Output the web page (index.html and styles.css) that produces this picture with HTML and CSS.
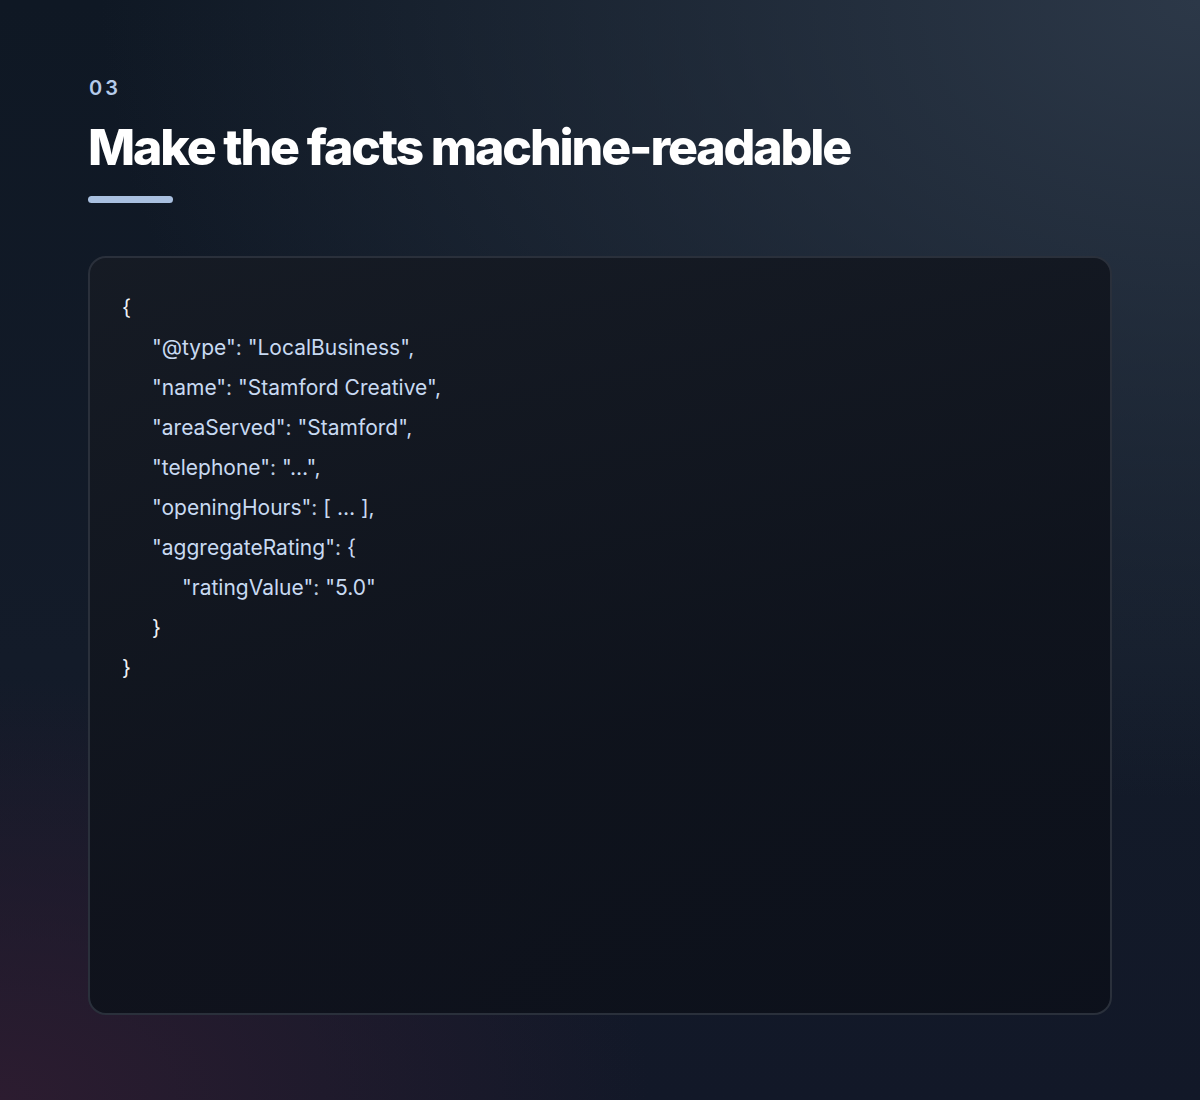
FILE: index.html
```html
<!DOCTYPE html>
<html lang="en">
<head>
<meta charset="utf-8">
<link rel="stylesheet" href="styles.css">
</head>
<body>
<main class="slide">
  <div class="eyebrow">03</div>
  <h1 class="title">Make the facts machine-readable</h1>
  <div class="rule"></div>
  <section class="card">
    <pre class="code"><span class="b">{</span>
<span class="i1"><span class="k">"@type"</span><span class="p">: </span><span class="k">"LocalBusiness",</span></span>
<span class="i1"><span class="k">"name"</span><span class="p">: </span><span class="k">"Stamford Creative",</span></span>
<span class="i1"><span class="k">"areaServed"</span><span class="p">: </span><span class="k">"Stamford",</span></span>
<span class="i1"><span class="k">"telephone"</span><span class="p">: </span><span class="k">"…",</span></span>
<span class="i1"><span class="k">"openingHours"</span><span class="p">: </span><span class="k">[ … ],</span></span>
<span class="i1"><span class="k">"aggregateRating"</span><span class="p">: </span><span class="k">{</span></span>
<span class="i2"><span class="k">"ratingValue"</span><span class="p">: </span><span class="k">"5.0"</span></span>
<span class="i1"><span class="b">}</span></span>
<span class="b">}</span></pre>
  </section>
</main>
</body>
</html>
```

FILE: styles.css
```css
html, body {
  margin: 0;
  padding: 0;
  width: 1200px;
  height: 1100px;
  overflow: hidden;
}
body {
  font-family: Inter, "Noto Sans", sans-serif;
  background:
    radial-gradient(ellipse 650px 420px at 0% 100%, rgba(44, 28, 48, 1), rgba(44, 28, 48, 0) 100%),
    radial-gradient(ellipse 1100px 800px at 100% 0%, rgba(44, 56, 72, 1), rgba(44, 56, 72, 0) 100%),
    linear-gradient(180deg, #0f1824 0%, #131b29 60%, #121828 100%);
}
.slide {
  box-sizing: border-box;
  width: 1200px;
  height: 1100px;
  padding: 76px 88px 0 88px;
  display: flex;
  flex-direction: column;
}
.eyebrow {
  font-size: 20px;
  font-weight: 600;
  letter-spacing: 3px;
  color: #b5cbea;
  line-height: 24px;
  margin-left: 1px;
}
.title {
  margin: 19px 0 0 0;
  font-size: 50px;
  line-height: 56px;
  font-weight: 800;
  letter-spacing: -2.15px;
  color: #ffffff;
}
.rule {
  margin-top: 21px;
  width: 85px;
  height: 7px;
  border-radius: 4px;
  background: #a9c0e0;
}
.card {
  margin-top: 53px;
  height: 759px;
  box-sizing: border-box;
  border: 2px solid #2a303b;
  border-radius: 18px;
  background: linear-gradient(160deg, rgba(22, 27, 36, 0.92) 0%, rgba(14, 18, 27, 0.92) 60%, rgba(12, 16, 26, 0.9) 100%);
  padding: 30px 32px;
}
.code {
  margin: 0;
  font-family: Inter, "Noto Sans", sans-serif;
  font-size: 21px;
  line-height: 40px;
  color: #c8daf2;
  white-space: pre;
}
.code .b { color: #eef2f8; }
.code .p { color: #b8c8de; }
.code .k { color: #c8daf2; }
.code .i1 { padding-left: 30px; }
.code .i2 { padding-left: 60px; }
```
